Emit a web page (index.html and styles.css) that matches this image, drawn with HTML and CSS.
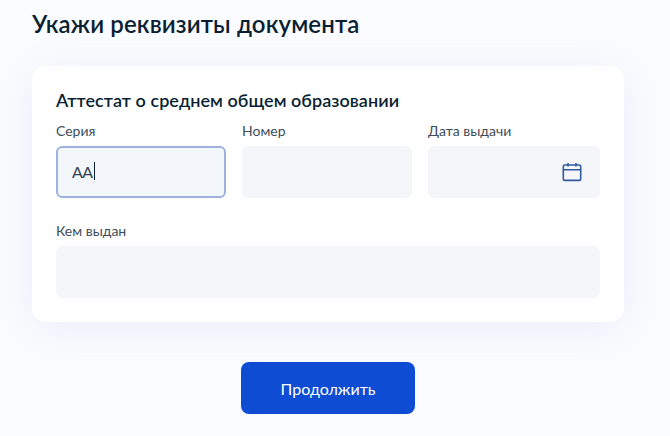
FILE: index.html
```html
<!DOCTYPE html>
<html lang="ru">
<head>
  <meta charset="UTF-8">
  <title>Реквизиты документа</title>
  <link rel="stylesheet" href="styles.css">
</head>
<body>
  <div class="page">
    <h1>Укажи реквизиты документа</h1>

    <div class="card">
      <h2>Аттестат о среднем общем образовании</h2>

      <div class="row">
        <div class="field">
          <div class="label">Серия</div>
          <div class="input focused"><span>АА</span><i class="caret"></i></div>
        </div>
        <div class="field">
          <div class="label">Номер</div>
          <div class="input"></div>
        </div>
        <div class="field">
          <div class="label">Дата выдачи</div>
          <div class="input date">
            <svg width="20" height="20" viewBox="0 0 20 20" fill="none" stroke="#2f5a9e" stroke-width="1.6">
              <rect x="1.3" y="3" width="17.4" height="15.4" rx="1.4"/>
              <path d="M1.3 7.8h17.4M6 1v3.6M14 1v3.6"/>
            </svg>
          </div>
        </div>
      </div>

      <div class="field wide">
        <div class="label">Кем выдан</div>
        <div class="input"></div>
      </div>
    </div>

    <div class="actions">
      <button>Продолжить</button>
    </div>
  </div>
</body>
</html>
```

FILE: styles.css
```css
html, body {
  height: 100%;
}
body {
  margin: 0;
  font-family: Lato, "Noto Sans", "Open Sans", sans-serif;
  background-color: #fbfcff;
  color: #0b1f33;
  overflow: hidden;
}
.page {
  padding: 9px 46px 0 32px;
}
h1 {
  margin: 0 0 27px;
  font-size: 24px;
  line-height: 30px;
  font-weight: 600;
  letter-spacing: 0.12px;
}
.card {
  background-color: #fff;
  border-radius: 14px;
  padding: 23px 24px 24px;
  box-shadow: 0 6px 40px rgba(70, 110, 190, 0.11);
}
h2 {
  margin: 0 0 10px;
  font-size: 18px;
  line-height: 22px;
  font-weight: 600;
  letter-spacing: 0.05px;
}
.row {
  display: grid;
  grid-template-columns: 170px 170px 172px;
  gap: 16px;
  margin-bottom: 23px;
}
.label {
  font-size: 14px;
  line-height: 20px;
  margin-bottom: 5px;
  color: #3d4c57;
}
.input {
  height: 52px;
  box-sizing: border-box;
  background-color: #f5f6fa;
  border-radius: 6px;
  display: flex;
  align-items: center;
}
.focused {
  background-color: #f3f6fa;
  border: 2px solid #9fb2de;
  padding: 0 0 2px 14px;
  font-size: 16px;
  letter-spacing: -0.5px;
  color: #33434f;
}
.caret {
  width: 1px;
  height: 18px;
  margin-left: 1px;
  background-color: #0b1f33;
}
.date {
  justify-content: flex-end;
  padding-right: 18px;
}
.actions {
  display: flex;
  justify-content: center;
  margin-top: 40px;
}
button {
  width: 174px;
  height: 52px;
  border: none;
  border-radius: 8px;
  background-color: #0d4cd3;
  color: #fff;
  font-family: inherit;
  font-size: 16px;
}
```
